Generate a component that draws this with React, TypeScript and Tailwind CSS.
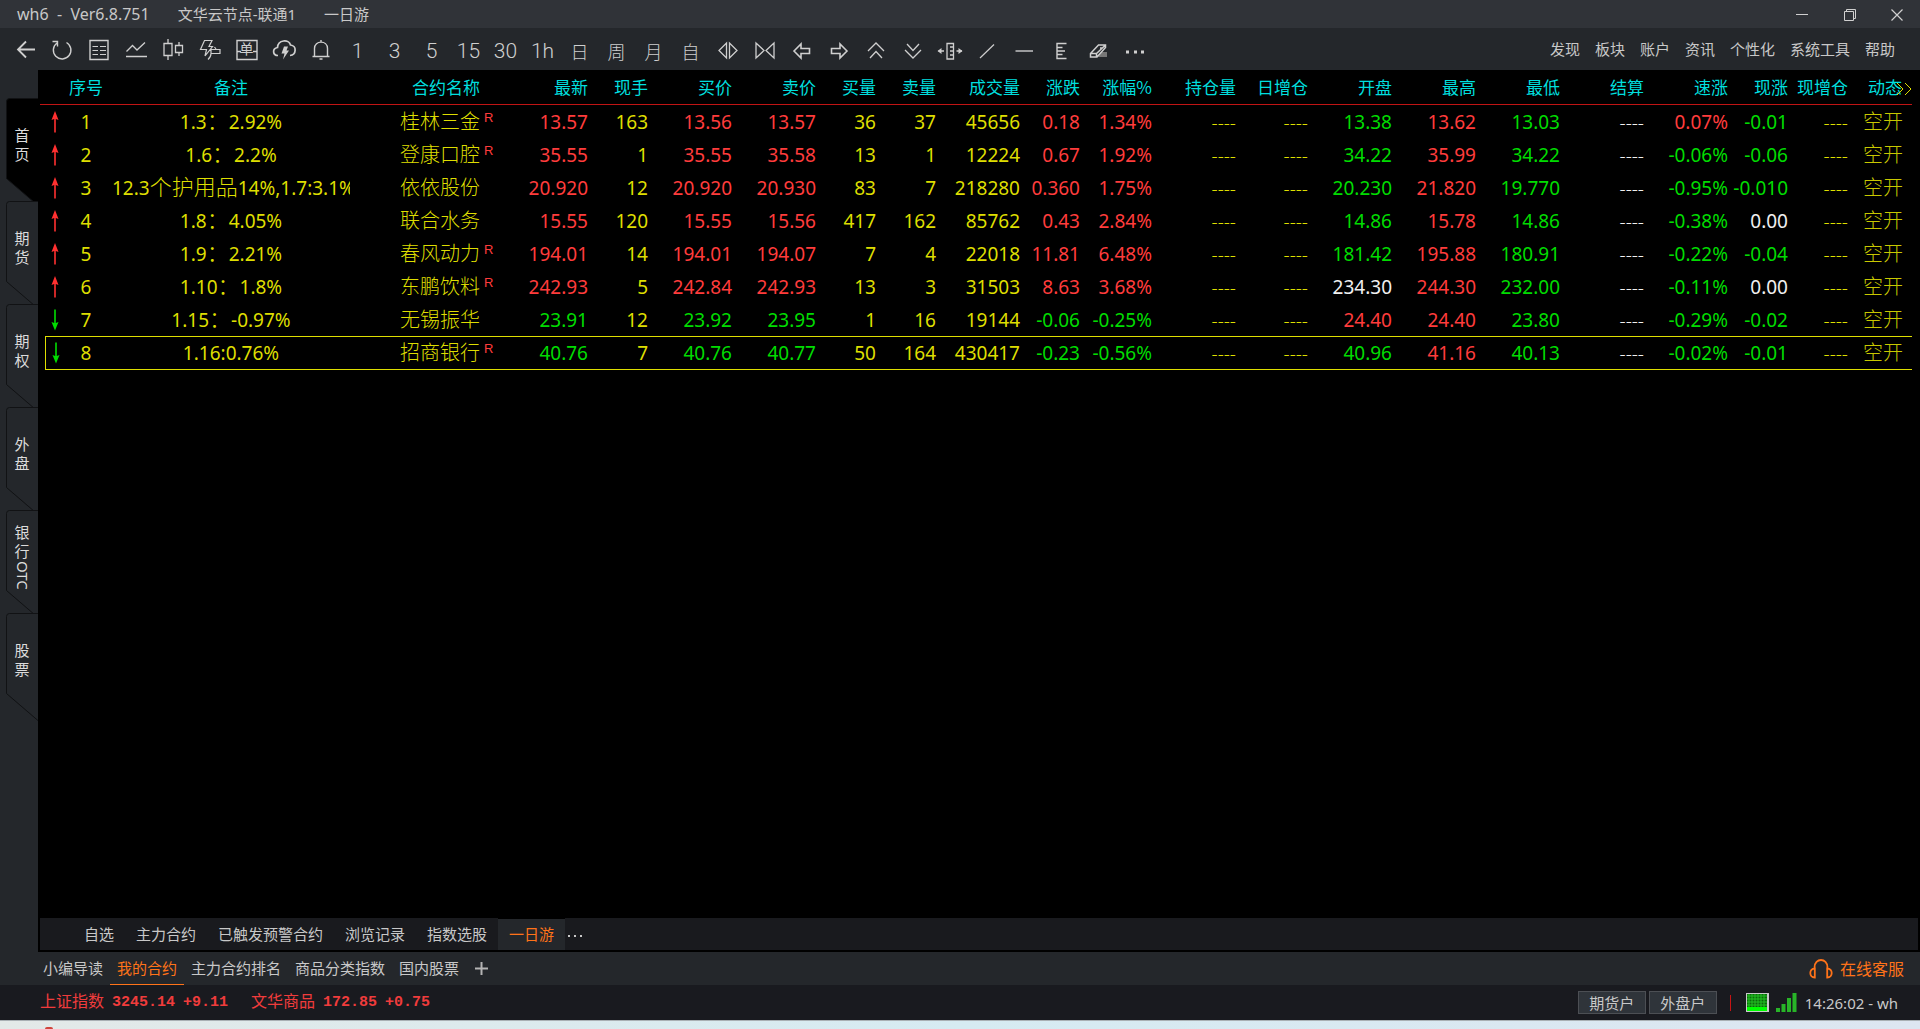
import React from 'react';

const ui = "font-['Noto_Sans','Noto_Sans_CJK_SC',sans-serif]";

type Tone = 'r' | 'g' | 'y' | 'w';

const toneClass: Record<Tone, string> = {
  r: 'text-[#ff3c3c]',
  g: 'text-[#00dc00]',
  y: 'text-[#dede00]',
  w: 'text-[#f0f0f0]',
};

const columns: { label: string; width: string }[] = [
  { label: '最新', width: 'w-[84px]' },
  { label: '现手', width: 'w-[60px]' },
  { label: '买价', width: 'w-[84px]' },
  { label: '卖价', width: 'w-[84px]' },
  { label: '买量', width: 'w-[60px]' },
  { label: '卖量', width: 'w-[60px]' },
  { label: '成交量', width: 'w-[84px]' },
  { label: '涨跌', width: 'w-[60px]' },
  { label: '涨幅%', width: 'w-[72px]' },
  { label: '持仓量', width: 'w-[84px]' },
  { label: '日增仓', width: 'w-[72px]' },
  { label: '开盘', width: 'w-[84px]' },
  { label: '最高', width: 'w-[84px]' },
  { label: '最低', width: 'w-[84px]' },
  { label: '结算', width: 'w-[84px]' },
  { label: '速涨', width: 'w-[84px]' },
  { label: '现涨', width: 'w-[60px]' },
  { label: '现增仓', width: 'w-[60px]' },
];

interface Quote {
  note: string;
  name: string;
  margin: boolean;
  up: boolean;
  cells: string[];
  tones: string;
}

const quotes: Quote[] = [
  { note: '1.3：2.92%', name: '桂林三金', margin: true, up: true, cells: ['13.57', '163', '13.56', '13.57', '36', '37', '45656', '0.18', '1.34%', '----', '----', '13.38', '13.62', '13.03', '----', '0.07%', '-0.01', '----'], tones: 'ryrryyyrryygrgwrgy' },
  { note: '1.6：2.2%', name: '登康口腔', margin: true, up: true, cells: ['35.55', '1', '35.55', '35.58', '13', '1', '12224', '0.67', '1.92%', '----', '----', '34.22', '35.99', '34.22', '----', '-0.06%', '-0.06', '----'], tones: 'ryrryyyrryygrgwggy' },
  { note: '12.3个护用品14%,1.7:3.1%', name: '依依股份', margin: false, up: true, cells: ['20.920', '12', '20.920', '20.930', '83', '7', '218280', '0.360', '1.75%', '----', '----', '20.230', '21.820', '19.770', '----', '-0.95%', '-0.010', '----'], tones: 'ryrryyyrryygrgwggy' },
  { note: '1.8：4.05%', name: '联合水务', margin: false, up: true, cells: ['15.55', '120', '15.55', '15.56', '417', '162', '85762', '0.43', '2.84%', '----', '----', '14.86', '15.78', '14.86', '----', '-0.38%', '0.00', '----'], tones: 'ryrryyyrryygrgwgwy' },
  { note: '1.9：2.21%', name: '春风动力', margin: true, up: true, cells: ['194.01', '14', '194.01', '194.07', '7', '4', '22018', '11.81', '6.48%', '----', '----', '181.42', '195.88', '180.91', '----', '-0.22%', '-0.04', '----'], tones: 'ryrryyyrryygrgwggy' },
  { note: '1.10：1.8%', name: '东鹏饮料', margin: true, up: true, cells: ['242.93', '5', '242.84', '242.93', '13', '3', '31503', '8.63', '3.68%', '----', '----', '234.30', '244.30', '232.00', '----', '-0.11%', '0.00', '----'], tones: 'ryrryyyrryywrgwgwy' },
  { note: '1.15：-0.97%', name: '无锡振华', margin: false, up: false, cells: ['23.91', '12', '23.92', '23.95', '1', '16', '19144', '-0.06', '-0.25%', '----', '----', '24.40', '24.40', '23.80', '----', '-0.29%', '-0.02', '----'], tones: 'gyggyyyggyyrrgwggy' },
  { note: '1.16:0.76%', name: '招商银行', margin: true, up: false, cells: ['40.76', '7', '40.76', '40.77', '50', '164', '430417', '-0.23', '-0.56%', '----', '----', '40.96', '41.16', '40.13', '----', '-0.02%', '-0.01', '----'], tones: 'gyggyyyggyygrgwggy' },
];

function Glyph({ children }: { children: React.ReactNode }) {
  return (
    <svg viewBox="0 0 26 22" className="h-[22px] w-[26px] shrink-0" fill="none" stroke="#cfcfcf" strokeWidth="1.4" aria-hidden="true">
      {children}
    </svg>
  );
}

const tools: { label: string; icon?: React.ReactNode; cjk?: boolean }[] = [
  { label: '返回', icon: <Glyph><path d="M23 10.500H6M14 2.500L6 10.500l8 8" strokeWidth="1.8" /></Glyph> },
  { label: '刷新', icon: <Glyph><path d="M8 4A8.800 8.800 0 1 0 17.500 3.500M3.500 2.500H8.500V7.500" /></Glyph> },
  { label: '报价', icon: <Glyph><path d="M4 1.500H22V20.500H4Z" /><path d="M6.500 7.500H12M14 7.500H20M6.500 11.500H12M14 11.500H20M6.500 15.500H12M14 15.500H20" strokeWidth="1.200" /></Glyph> },
  { label: '分时', icon: <Glyph><path d="M3 17.500H24M3.500 12.500L9.500 6.500L14 11L22 3.500" strokeWidth="1.300" /></Glyph> },
  { label: 'K线', icon: <Glyph><path d="M4 4.500H12V16.500H4ZM8 0V4.500M8 16.500V21M15.500 6.500H22.500V13.500H15.500ZM19 3V6.500M19 13.500V17" strokeWidth="1.300" /></Glyph> },
  { label: '闪电下单', icon: <Glyph><path d="M7.500 1.500H15L12 7.500H15.500L8 17L9.500 10.500H3.500ZM14 10.500H23V14.500H14M14 10.500V14.500Q14 18 11 20.500M17.500 8L19 10" strokeWidth="1.200" /></Glyph> },
  { label: '下单', icon: <span className="relative flex"><Glyph><path d="M3 1.500H23V20.500H3ZM3 12.500H7M19 12.500H23" /></Glyph><span aria-hidden="true" className="absolute inset-0 text-center text-[14px] leading-[20px]">单</span></span> },
  { label: '云条件单', icon: <Glyph><path d="M7 16.500C1.500 16.500 1 9.500 6.500 8.500C7 .5 18 0 19.500 6C26 6.500 25.500 16 19 16.500" strokeWidth="1.700" /><path d="M13 7.500H17L15.500 11.500H18L12 20.500L13.500 14.500H10.500Z" fill="#cfcfcf" stroke="none" /></Glyph> },
  { label: '预警', icon: <Glyph><path d="M4.500 17.500H21.500M6.500 17V9.500C6.500 1 19.500 1 19.500 9.500V17M13 1V3M11.500 20H14.500" /></Glyph> },
  { label: '1' },
  { label: '3' },
  { label: '5' },
  { label: '15' },
  { label: '30' },
  { label: '1h' },
  { label: '日', cjk: true },
  { label: '周', cjk: true },
  { label: '月', cjk: true },
  { label: '自', cjk: true },
  { label: '放大', icon: <Glyph><path d="M11.500 4V19L4 11.500ZM14.500 4V19L22 11.500Z" strokeWidth="1.300" /></Glyph> },
  { label: '缩小', icon: <Glyph><path d="M4 4V19L12 11.500ZM22 4V19L14 11.500Z" strokeWidth="1.300" /></Glyph> },
  { label: '左移', icon: <Glyph><path d="M5 12L12 5V9.500H20.500V14.500H12V19Z" strokeWidth="1.600" /></Glyph> },
  { label: '右移', icon: <Glyph><path d="M21 12L14 5V9.500H5.500V14.500H14V19Z" strokeWidth="1.600" /></Glyph> },
  { label: '上翻', icon: <Glyph><path d="M5 12L13 4L21 12M7 19L13 12.500L19 19" strokeWidth="1.300" /></Glyph> },
  { label: '下翻', icon: <Glyph><path d="M7 5L13 11.500L19 5M5 11L13 19L21 11" strokeWidth="1.300" /></Glyph> },
  { label: '测量', icon: <Glyph><path d="M10 4.500H16.500V20H10ZM13 8H16M13 12H16M13 16H16M1.500 12H7M19.500 12H25" strokeWidth="1.300" /><path d="M0.500 12L4.500 9V15ZM25.500 12L21.500 9V15Z" fill="#cfcfcf" stroke="none" /></Glyph> },
  { label: '画线', icon: <Glyph><path d="M6 19L20 5.500" strokeWidth="1.200" /></Glyph> },
  { label: '水平线', icon: <Glyph><path d="M4.500 12H22" /></Glyph> },
  { label: '刻度', icon: <Glyph><path d="M18.500 4.500H9V19.500H18.500M9 8.500H14.500M9 12H17M9 15.500H14.500" /></Glyph> },
  { label: '橡皮', icon: <Glyph><path d="M16 13H22V18H13Z" fill="#777" stroke="none" /><path d="M5.500 14.500L13.500 6H20.500V8.500L12 18H5.500ZM5.500 14.500H11.500L20 6.500M11.500 14.500V18M15 9H17" strokeWidth="1.500" /></Glyph> },
  { label: '更多', icon: <Glyph><path d="M4 13H7M12 13H15M19 13H22" strokeWidth="3" /></Glyph> },
];

const menu = ['发现', '板块', '账户', '资讯', '个性化', '系统工具', '帮助'];
const sideTabs = ['首页', '期货', '期权', '外盘', '银行OTC', '股票'];
const groupTabs = ['自选', '主力合约', '已触发预警合约', '浏览记录', '指数选股', '一日游'];
const pageTabs = ['小编导读', '我的合约', '主力合约排名', '商品分类指数', '国内股票'];

function TitleBar() {
  return (
    <header className="flex h-7 shrink-0 items-center bg-[#303338] pl-[17px] text-[15px] leading-7 text-[#c8c8c8]">
      <h1 className="flex gap-7 whitespace-pre">
        <span className="text-[16px]">wh6  -  Ver6.8.751</span>
        <span>文华云节点-联通1</span>
        <span>一日游</span>
      </h1>
      <div className="ml-auto flex">
        <button aria-label="最小化" className="flex h-7 w-12 items-center justify-center pt-0.5">
          <svg className="size-3" viewBox="0 0 12 12" stroke="#d0d0d0" fill="none"><path d="M0 5.500H12" /></svg>
        </button>
        <button aria-label="还原" className="flex h-7 w-12 items-center justify-center pt-0.5">
          <svg className="size-3" viewBox="0 0 12 12" stroke="#d0d0d0" fill="none"><path d="M.5 2.500H9.500V11.500H.5ZM2.500 2.500V.5H11.500V9.500H9.500" /></svg>
        </button>
        <button aria-label="关闭" className="flex h-7 w-[46px] items-center justify-center pt-0.5">
          <svg className="size-3" viewBox="0 0 12 12" stroke="#d0d0d0" strokeWidth="1.200" fill="none"><path d="M.5 .5L11.500 11.500M11.500 .5L.5 11.500" /></svg>
        </button>
      </div>
    </header>
  );
}

function Toolbar() {
  return (
    <nav className="flex h-[42px] shrink-0 items-center bg-[#24272b] pl-1.5 pr-[25px] text-[#cfcfcf]">
      {tools.map((t) => (
        <button key={t.label} aria-label={t.label} className="flex h-10 w-[37px] shrink-0 items-center justify-center pt-0.5">
          {t.icon ?? (
            <span className={t.cjk ? "pt-0.5 font-['Noto_Sans_CJK_SC',sans-serif] text-[18px] leading-5 font-light" : "pt-0.5 font-['Roboto',sans-serif] text-[21px] leading-5 font-light"}>
              {t.label}
            </span>
          )}
        </button>
      ))}
      <div className="ml-auto flex gap-[15px] text-[15px] leading-5 whitespace-nowrap text-[#c8c8c8]">
        {menu.map((m) => (
          <button key={m}>{m}</button>
        ))}
      </div>
    </nav>
  );
}

function SideTabs() {
  return (
    <nav className="w-[38px] shrink-0 bg-[#24272b] pt-7 pl-1.5">
      {sideTabs.map((label, i) => (
        <button key={label} className="relative flex h-[103px] w-8 flex-col justify-start text-[15px] text-[#dcdcdc]">
          <svg aria-hidden="true" viewBox="0 0 32 108" className="absolute top-0 left-0 h-[108px] w-8" fill={i === 0 ? '#000' : '#24272b'} stroke="#111214">
            <path d="M32.500 .5H3.500Q.5 .5 .5 3.500V80.500L32.500 108" />
          </svg>
          <span className="relative flex h-[93px] w-8 flex-col items-center justify-center">
            {label.replace('OTC', '').split('').map((c) => (
              <span key={c} className="block leading-[19px]">{c}</span>
            ))}
            {label.endsWith('OTC') && <span className="leading-[19px] [writing-mode:vertical-rl]">OTC</span>}
          </span>
        </button>
      ))}
    </nav>
  );
}

function Arrow({ up }: { up: boolean }) {
  return (
    <svg viewBox="0 0 8 22" className="mx-auto block h-[22px] w-2" role="img" aria-label={up ? '上涨' : '下跌'}>
      {up ? (
        <path d="M4 0L7.500 9L4.800 8V21.500H3.200V8L.5 9Z" fill="#ff3030" />
      ) : (
        <path d="M4 21.500L7.500 13L4.800 14V.5H3.200V14L.5 13Z" fill="#00dc00" />
      )}
    </svg>
  );
}

function Note({ text }: { text: string }) {
  return (
    <>
      {text.split(/([^\x00-\x7f]+)/).map((part, i) =>
        i % 2 ? <span key={i} className="text-[22px] leading-none font-light">{part}</span> : part,
      )}
    </>
  );
}

function QuoteTable() {
  return (
    <table className={`w-full table-fixed border-separate border-spacing-0 text-right text-[19px] leading-7 whitespace-nowrap ${ui}`}>
      <colgroup>
        <col className="w-[5px]" />
        <col className="w-[25px]" />
        <col className="w-8" />
        <col />
        <col className="w-36" />
        {columns.map((c) => (
          <col key={c.label} className={c.width} />
        ))}
        <col className="w-16" />
      </colgroup>
      <thead>
        <tr className="h-[35px] font-['Noto_Sans_CJK_SC',sans-serif] text-[17px] text-[#00dede] [&>th]:border-b [&>th]:border-[#c01414] [&>th]:p-0 [&>th]:font-normal">
          <th />
          <th />
          <th><span className="flex justify-center">序号</span></th>
          <th className="text-center">备注</th>
          <th><span className="pr-6">合约名称</span></th>
          {columns.map((c) => (
            <th key={c.label}>{c.label}</th>
          ))}
          <th className="relative">
            <span className="pr-[10px]">动态</span>
            <svg aria-hidden="true" viewBox="0 0 16 14" className="absolute top-3 right-0 h-[14px] w-4" fill="none" stroke="#dede00">
              <path d="M1 1L7 7L1 13M9 1L15 7L9 13" />
            </svg>
          </th>
        </tr>
      </thead>
      <tbody>
        {quotes.map((q, i) => (
          <tr
            key={q.name}
            className={`h-[33px] text-[#dede00] [&>td]:p-0 ${i === 7 ? '[&>td:nth-child(n+2)]:shadow-[inset_0_1px_0_#dede00,0_1px_0_#dede00] [&>td:nth-child(2)]:border-l [&>td:nth-child(2)]:border-[#dede00]' : ''}`}
          >
            <td />
            <td className="pr-[5px]!"><Arrow up={q.up} /></td>
            <td className="text-center">{i + 1}</td>
            <td className="text-center">
              <div className="mx-2.5 h-7 overflow-x-clip"><Note text={q.note} /></div>
            </td>
            <td className="text-[20px] font-light">
              <span className="flex h-7 justify-end">
                {q.name}
                <sup className="top-0 w-6 pl-1 text-left font-['Liberation_Sans',sans-serif] text-[13px] leading-5 font-normal text-[#ff3c3c]">{q.margin ? 'R' : ''}</sup>
              </span>
            </td>
            {q.cells.map((v, j) => (
              <td key={columns[j].label} className={toneClass[q.tones[j] as Tone]}>
                <span className={v === '----' ? 'font-light' : ''}>{v}</span>
              </td>
            ))}
            <td className="text-[20px] font-light text-[#c8c800]"><span className="pr-[9px]">空开</span></td>
          </tr>
        ))}
      </tbody>
    </table>
  );
}

function StatusBar() {
  return (
    <footer className="flex h-[35px] shrink-0 items-center bg-[#191a1f] pr-[22px] pl-10 text-[#c8c8c8]">
      <div className="flex font-['Liberation_Mono','Noto_Sans_CJK_SC',monospace] text-[15px] leading-5 font-bold text-[#f03c3c]">
        <span className="text-[16px] font-normal">上证指数</span>
        <span className="ml-2">3245.14</span>
        <span className="ml-2">+9.11</span>
        <span className="ml-[23px] text-[16px] font-normal">文华商品</span>
        <span className="ml-2">172.85</span>
        <span className="ml-2">+0.75</span>
      </div>
      <div className="ml-auto flex items-center text-[15px]">
        <button className="h-[23px] w-[68px] border border-[#4c4f54] bg-[#2f343a] leading-[20px]">期货户</button>
        <button className="ml-[3px] h-[23px] w-[68px] border border-[#4c4f54] bg-[#2f343a] leading-[20px]">外盘户</button>
        <span className="ml-[13px] h-4 w-px bg-[#c81414]" />
        <svg className="ml-[15px] h-[19px] w-[23px]" viewBox="0 0 23 19" role="img" aria-label="行情负载">
          <path d="M0 0H23V19H0Z" fill="#c8c8c8" />
          <path d="M1 1H21V18H1Z" fill="#0a6a0a" />
          <path d="M1 3H21M1 6H21M1 9H21M1 12H21M3 1V14M6 1V14M9 1V14M12 1V14M15 1V14M18 1V14" stroke="#22c022" />
          <path d="M1 14H21V18H1Z" fill="#00ff00" />
        </svg>
        <svg className="ml-[7px] h-[19px] w-[21px]" viewBox="0 0 21 19" fill="#28b428" role="img" aria-label="网络信号">
          <path d="M0 15H4V19H0ZM5.500 11H9.500V19H5.500ZM11 5H15V19H11ZM16.500 0H20.500V19H16.500Z" />
        </svg>
        <time className="ml-2 leading-5">14:26:02 - wh</time>
      </div>
    </footer>
  );
}

export default function App() {
  return (
    <div className={`flex h-screen flex-col overflow-hidden bg-black ${ui}`}>
      <TitleBar />
      <Toolbar />
      <main className="flex min-h-0 flex-1">
        <SideTabs />
        <section className="flex min-w-0 flex-1 flex-col border-b-2 border-black bg-black px-[2px]">
          <div className="min-h-0 flex-1 overflow-hidden pr-1.5">
            <QuoteTable />
          </div>
          <div className="flex h-8 shrink-0 items-center bg-[#191a1e] pl-[33px] text-[15px] text-[#c8c8c8]">
            {groupTabs.map((t) => (
              <button key={t} className={t === '一日游' ? 'h-8 border-t border-black bg-[#24272b] px-[11px] text-[#ff7319]' : 'h-8 px-[11px]'}>{t}</button>
            ))}
            <button aria-label="更多分组" className="flex gap-1 pt-1 pl-[3px]">
              <span className="size-0.5 bg-[#c8c8c8]" />
              <span className="size-0.5 bg-[#c8c8c8]" />
              <span className="size-0.5 bg-[#c8c8c8]" />
            </button>
          </div>
        </section>
      </main>
      <nav className="flex h-[33px] shrink-0 items-center bg-[#24272b] pr-4 pl-9 text-[15px] text-[#c8c8c8]">
        {pageTabs.map((t) => (
          <button key={t} className={t === '我的合约' ? 'h-[33px] border-b border-[#ff7319] px-[7px] text-[#ff7319]' : 'h-[33px] border-b border-transparent px-[7px]'}>{t}</button>
        ))}
        <button aria-label="新建页面" className="ml-[9px]">
          <svg className="size-[13px]" viewBox="0 0 13 13" stroke="#b4b4b4" strokeWidth="2"><path d="M0 6.500H13M6.500 0V13" /></svg>
        </button>
        <button className="ml-auto flex items-center gap-[7px] text-[16px] text-[#ff7319]">
          <svg className="h-5 w-6" viewBox="0 0 24 20" fill="none" stroke="#ff7319" strokeWidth="1.800">
            <path d="M5.500 10V8.500C5.500 -1.500 18.500 -1.500 18.500 8.500V10M5.800 9.500V18.500C-.2 18.500 -.2 9.500 5.800 9.500ZM18.200 9.500V18.500C24.200 18.500 24.200 9.500 18.200 9.500Z" />
          </svg>
          在线客服
        </button>
      </nav>
      <StatusBar />
      <div className="flex h-[9px] shrink-0 items-end border-t border-[#a9b0b4] bg-linear-to-r from-[#e3e9e8] via-[#d6ebf2] to-[#dde6f1] pl-[45px]">
        <span className="h-0.5 w-2 rounded-t-full bg-[#d0453c]" />
      </div>
    </div>
  );
}
